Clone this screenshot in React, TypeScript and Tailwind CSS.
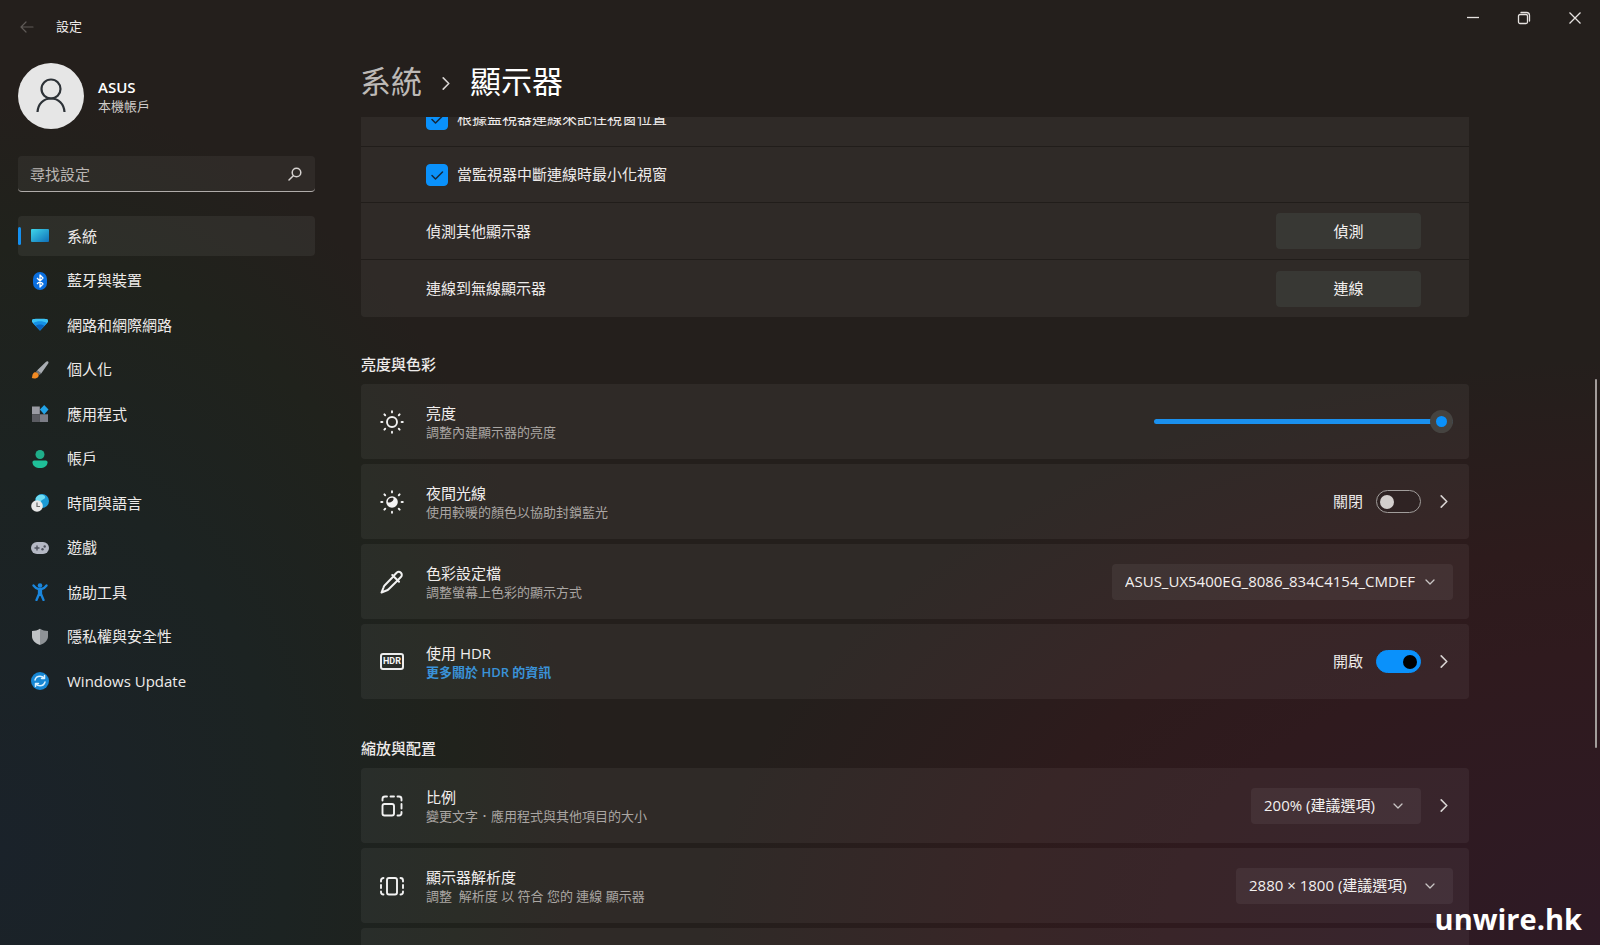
import React, { useState } from "react";

type IconProps = { children: React.ReactNode; size?: string; box?: string };

function Svg({ children, size = "size-[18px]", box = "0 0 18 18" }: IconProps) {
  return (
    <svg viewBox={box} className={`${size} shrink-0`} fill="none" aria-hidden="true">
      {children}
    </svg>
  );
}

const navItems: { label: string; icon: React.ReactNode }[] = [
  {
    label: "系統",
    icon: (
      <Svg>
        <defs>
          <linearGradient id="sys" x1="0" y1="0" x2="1" y2="1">
            <stop offset="0" stopColor="#3fd6ea" />
            <stop offset="1" stopColor="#0f6fb8" />
          </linearGradient>
        </defs>
        <rect x="0" y="2" width="18" height="13" rx="1" fill="url(#sys)" />
      </Svg>
    ),
  },
  {
    label: "藍牙與裝置",
    icon: (
      <Svg>
        <rect x="2" y="0" width="14" height="18" rx="7" fill="#0a6fe0" />
        <path d="M6 6l6 6-3 3V3l3 3-6 6" stroke="#fff" strokeWidth="1.3" strokeLinejoin="round" />
      </Svg>
    ),
  },
  {
    label: "網路和網際網路",
    icon: (
      <Svg>
        <path d="M1 6V4.200C1 3.300 2 2.800 9 2.800s8 .5 8 1.400V6L9 14.500z" fill="#3cc3f5" />
        <path d="M2 7.200C4 5.800 6.500 5.200 9 5.200s5 .6 7 2L9 14.500z" fill="#1591e6" />
        <path d="M4.500 9.800C6 8.800 7.500 8.400 9 8.400s3 .4 4.500 1.400L9 14.500z" fill="#0b63bd" />
      </Svg>
    ),
  },
  {
    label: "個人化",
    icon: (
      <Svg>
        <path d="M17 .4c.9.500.5 1.700 0 2.400L10.200 12.600 6 9.500 14.800 1c.6-.5 1.400-.9 2.200-.6z" fill="#a9adb2" />
        <path d="M6.300 9.300l3.900 3-1.500 1.700-3.900-3z" fill="#70757a" />
        <path d="M.8 17c.6-.8.200-2.200.9-3.800C2.500 11.200 4.200 10.800 5.600 11.400c1.800.6 2.800 2.400 1.800 4C6.300 17.400 3.200 18 .8 17z" fill="#f08a24" />
      </Svg>
    ),
  },
  {
    label: "應用程式",
    icon: (
      <Svg>
        <rect x="1" y="1.500" width="7.800" height="7.800" fill="#9a9ba3" />
        <rect x="1" y="9.300" width="7.800" height="7.700" fill="#5b5c62" />
        <rect x="8.800" y="9.300" width="8.200" height="7.700" fill="#7c7d86" />
        <path d="M13.200 0l4.300 4.600-4.300 4.900-4.300-4.900z" fill="#22a3e8" />
      </Svg>
    ),
  },
  {
    label: "帳戶",
    icon: (
      <Svg>
        <circle cx="9" cy="4.500" r="4.500" fill="#1fae8a" />
        <path d="M1.500 12.200c0-.9.700-1.700 1.700-1.700h11.600c1 0 1.700.8 1.700 1.700 0 3.600-3.300 5.800-7.500 5.800s-7.500-2.200-7.500-5.800z" fill="#1fbf98" />
      </Svg>
    ),
  },
  {
    label: "時間與語言",
    icon: (
      <Svg>
        <circle cx="11" cy="7" r="7" fill="#1c9bd6" />
        <path d="M8 1c4-1 7 1 6 3s-4 1-4 4-4 0-5-2 1-4 3-5z" fill="#6fdcf2" />
        <circle cx="6" cy="12" r="5.800" fill="#e8e8e8" />
        <path d="M6 8.500V12.500h3" stroke="#6b6b6b" strokeWidth="1.200" />
      </Svg>
    ),
  },
  {
    label: "遊戲",
    icon: (
      <Svg>
        <rect x="0" y="3" width="18" height="12" rx="6" fill="#b4b8c4" />
        <path d="M6 6.500v5M3.500 9h5" stroke="#4d515c" strokeWidth="1.400" />
        <circle cx="11.500" cy="10.300" r="1.200" fill="#4d515c" />
        <circle cx="13.700" cy="7.500" r="1.200" fill="#4d515c" />
      </Svg>
    ),
  },
  {
    label: "協助工具",
    icon: (
      <Svg>
        <circle cx="9" cy="2.500" r="2.300" fill="#1a86dd" />
        <path
          d="M2.500 2.500c1.500 2 3 3 4.500 3.300h4c1.500-.3 3-1.300 4.500-3.300M8 6v5l-2.500 6M10 6v5l2.500 6M9 6v6"
          stroke="#1a86dd"
          strokeWidth="2.300"
          strokeLinecap="round"
          strokeLinejoin="round"
        />
      </Svg>
    ),
  },
  {
    label: "隱私權與安全性",
    icon: (
      <Svg>
        <path d="M9 .8c2.500 1.700 5 2.200 8 2.200v5.200c0 4-3 6.800-8 8.800z" fill="#8e9296" />
        <path d="M9 .8C6.500 2.500 4 3 1 3v5.200c0 4 3 6.800 8 8.800z" fill="#bfc2c5" />
      </Svg>
    ),
  },
  {
    label: "Windows Update",
    icon: (
      <Svg>
        <circle cx="9" cy="9" r="9" fill="#1787d4" />
        <path
          d="M4 8c.6-2.300 2.600-3.700 5-3.700 1.600 0 3 .6 4 1.800M13.500 3.500v3h-3M14 10c-.6 2.300-2.600 3.700-5 3.700-1.600 0-3-.6-4-1.800M4.500 14.500v-3h3"
          stroke="#d9f1ff"
          strokeWidth="1.500"
          strokeLinecap="round"
          strokeLinejoin="round"
        />
      </Svg>
    ),
  },
];

const rays = [0, 45, 90, 135, 180, 225, 270, 315];

function SunIcon({ night }: { night?: boolean }) {
  return (
    <Svg size="size-6" box="0 0 24 24">
      {rays.map((r) => (
        <path key={r} d="M12 1.200v1.200" stroke="#f2f2f2" strokeWidth="1.900" strokeLinecap="round" transform={`rotate(${r} 12 12)`} />
      ))}
      {night ? (
        <>
          <circle cx="12" cy="12" r="5.800" fill="#f5f5f5" />
          <path d="M7.800 11.500c0-2.200 1.600-3.700 4.200-3.700 1.300 0 1.900.6 1.500 1.700-.6 1.800-2.200 2.800-4.200 3-1 .1-1.500-.2-1.500-1z" fill="#2e2b28" />
        </>
      ) : (
        <circle cx="12" cy="12" r="5" stroke="#f2f2f2" strokeWidth="1.900" />
      )}
    </Svg>
  );
}

function DropperIcon() {
  return (
    <Svg size="size-6" box="0 0 24 24">
      <path
        d="M14 5.500l2.600-2.700c1.300-1.200 3.100-1.200 4.300 0s1.200 3 0 4.200l-2.700 2.700M12.300 5l6.700 6.700M13.300 6.500l-8.500 8.700c-.6.7-1 1.300-1.200 2.100L1.500 22.500l5-2c.8-.2 1.500-.6 2.100-1.200l8.700-8.600"
        stroke="#f2f2f2"
        strokeWidth="2"
        strokeLinecap="round"
        strokeLinejoin="round"
      />
    </Svg>
  );
}

function HdrIcon() {
  return (
    <span
      aria-hidden="true"
      className="flex h-[17px] w-6 shrink-0 items-center justify-center rounded-[3px] border-2 border-[#ededed] font-[Roboto] text-[9px] leading-none font-bold text-[#f5f5f5]"
    >
      HDR
    </span>
  );
}

function ScaleIcon() {
  return (
    <Svg size="size-6" box="0 0 24 24">
      <g stroke="#f2f2f2" strokeWidth="1.900" strokeLinecap="round" strokeLinejoin="round">
        <rect x="2.500" y="10" width="11.500" height="11.500" rx="2" />
        <path d="M2.500 6.500V5c0-1.400 1.100-2.500 2.500-2.500h2M10.500 2.500h3.500M17.500 2.500H19c1.400 0 2.500 1.100 2.500 2.500v1.500M21.500 10v4.500M21.500 18v1c0 1.400-1.100 2.500-2.500 2.500h-1.500" />
      </g>
    </Svg>
  );
}

function ResolutionIcon() {
  return (
    <Svg size="size-6" box="0 0 24 24">
      <g stroke="#f2f2f2" strokeWidth="1.900" strokeLinecap="round" strokeLinejoin="round">
        <rect x="7" y="4" width="10" height="16.500" rx="2" />
        <path d="M3.500 4C2 4 1 5 1 6.500v1M1 11v3M1 17.500v.5c0 1.500 1 2.500 2.500 2.500M20.500 4C22 4 23 5 23 6.500v1M23 11v3M23 17.500v.5c0 1.500-1 2.500-2.500 2.500" />
      </g>
    </Svg>
  );
}

function ChevronRight() {
  return (
    <svg viewBox="0 0 8 14" className="h-[13px] w-2" fill="none" aria-hidden="true">
      <path d="M1 1l6 6-6 6" stroke="#d8d4d2" strokeWidth="1.700" strokeLinecap="round" strokeLinejoin="round" />
    </svg>
  );
}

function MoreButton({ label }: { label: string }) {
  return (
    <button type="button" aria-label={label} className="flex h-9 w-[19px] items-center justify-center">
      <ChevronRight />
    </button>
  );
}

function Dropdown({ label, value, width }: { label: string; value: string; width: string }) {
  return (
    <div className="relative">
      <select
        aria-label={label}
        defaultValue={value}
        className={`${width} h-9 appearance-none rounded-[4px] bg-white/6 pr-8 pl-[13px] text-[15px] text-[#f3f0ef]`}
      >
        <option>{value}</option>
      </select>
      <svg viewBox="0 0 10 6" className="pointer-events-none absolute top-[15px] right-[18px] h-[6px] w-[10px]" fill="none" aria-hidden="true">
        <path d="M1 1l4 4 4-4" stroke="#c9c5c4" strokeWidth="1.300" strokeLinecap="round" strokeLinejoin="round" />
      </svg>
    </div>
  );
}

function Toggle({ id, initial, label }: { id: string; initial: boolean; label: string }) {
  const [on, setOn] = useState(initial);
  return (
    <div className="flex items-center gap-[13px]">
      <label htmlFor={id} className="text-[15px] text-[#eeebea]">
        {on ? "開啟" : "關閉"}
      </label>
      <input
        id={id}
        type="checkbox"
        role="switch"
        aria-label={label}
        checked={on}
        onChange={(e) => setOn(e.target.checked)}
        className="flex h-[23px] w-[45px] appearance-none items-center rounded-full border border-[#a19d9b] bg-black/10 px-[3px] before:size-[14px] before:rounded-full before:bg-[#d3cfcd] checked:justify-end checked:border-[#0a91fb] checked:bg-[#0a91fb] checked:before:bg-black"
      />
    </div>
  );
}

function CheckRow({ id, label }: { id: string; label: string }) {
  return (
    <div className="flex h-14 items-center gap-[9px] pl-[65px]">
      <span className="relative size-[22px] shrink-0">
        <input id={id} type="checkbox" defaultChecked className="peer block size-[22px] appearance-none rounded-[4px] border border-[#a19d9b] checked:border-[#0a91fb] checked:bg-[#0a91fb]" />
        <svg viewBox="0 0 22 22" className="pointer-events-none absolute inset-0 hidden size-[22px] peer-checked:block" fill="none" aria-hidden="true">
          <path d="M6 11.500l3.500 3.500 7-7" stroke="#14283c" strokeWidth="1.500" strokeLinecap="round" strokeLinejoin="round" />
        </svg>
      </span>
      <label htmlFor={id} className="text-[15px] text-[#eeebea]">
        {label}
      </label>
    </div>
  );
}

function ActionRow({ label, action }: { label: string; action: string }) {
  return (
    <div className="flex h-[57px] items-center justify-between pr-12 pl-[65px]">
      <span className="text-[15px] text-[#eeebea]">{label}</span>
      <button type="button" className="h-9 w-[145px] rounded-[4px] bg-[#383834] text-[15px] text-[#f3f0ef]">
        {action}
      </button>
    </div>
  );
}

type CardProps = { icon: React.ReactNode; title: string; detail: React.ReactNode; children?: React.ReactNode };

function Card({ icon, title, detail, children }: CardProps) {
  return (
    <section className="flex h-[75px] items-center rounded-[4px] bg-white/5 pr-4 pl-[19px]">
      <div className="flex w-6 justify-center">{icon}</div>
      <div className="ml-[22px] flex-1">
        <h3 className="text-[15px] leading-[20px] text-[#f1eeed]">{title}</h3>
        <p className="text-[13px] leading-[18px] text-[#aaa6a3]">{detail}</p>
      </div>
      <div className="flex items-center gap-[13px]">{children}</div>
    </section>
  );
}

export default function App() {
  return (
    <div className="relative flex h-screen flex-col overflow-hidden bg-[#241f1c] bg-[radial-gradient(ellipse_58%_62%_at_102%_100%,#2e1a26_0%,#2f1a1e_50%,#2d1b1c_68%,transparent_100%),radial-gradient(ellipse_36%_80%_at_0%_90%,#1a222a_0%,#1c2322_50%,#20221c_80%,transparent_100%)] font-['Open_Sans','Noto_Sans_CJK_TC',sans-serif] text-[#eeebea]">
      <header className="flex h-[54px] shrink-0 items-start justify-between">
        <div className="flex h-full items-center pl-5">
          <button type="button" aria-label="上一頁">
            <svg viewBox="0 0 14 12" className="h-3 w-[14px]" fill="none" aria-hidden="true">
              <path d="M13 6H1M6 1L1 6l5 5" stroke="#5f5a57" strokeWidth="1.200" strokeLinecap="round" strokeLinejoin="round" />
            </svg>
          </button>
          <span className="ml-[22px] text-[13px]">設定</span>
        </div>
        <div className="flex">
          <button type="button" aria-label="最小化" className="flex h-9 w-[51px] items-center justify-center">
            <svg viewBox="0 0 14 14" className="size-[14px]" fill="none" aria-hidden="true">
              <path d="M1 6.500h12" stroke="#e6e2e0" strokeWidth="1.300" />
            </svg>
          </button>
          <button type="button" aria-label="還原" className="flex h-9 w-[51px] items-center justify-center">
            <svg viewBox="0 0 14 14" className="size-[14px]" fill="none" aria-hidden="true">
              <rect x="1.500" y="3.500" width="9" height="9" rx="1.500" stroke="#e6e2e0" strokeWidth="1.300" />
              <path d="M4 1.500h5.500c1.700 0 3 1.300 3 3V10" stroke="#e6e2e0" strokeWidth="1.300" strokeLinecap="round" />
            </svg>
          </button>
          <button type="button" aria-label="關閉視窗" className="flex h-9 w-[51px] items-center justify-center">
            <svg viewBox="0 0 14 14" className="size-[14px]" fill="none" aria-hidden="true">
              <path d="M1.500 1.500l11 11M12.500 1.500l-11 11" stroke="#e6e2e0" strokeWidth="1.300" />
            </svg>
          </button>
        </div>
      </header>

      <div className="flex min-h-0 flex-1">
        <aside className="w-[360px] shrink-0 pt-[9px] pr-[45px] pl-[18px]">
          <div className="flex items-center gap-[14px]">
            <div className="flex size-[66px] items-center justify-center rounded-full bg-[#e6e6e6]">
              <svg viewBox="0 0 32 36" className="h-9 w-8" fill="none" aria-hidden="true">
                <circle cx="16" cy="11" r="9.500" stroke="#2d3237" strokeWidth="2.200" />
                <path d="M2.500 34C3 26 8.500 20.500 16 20.500S29 26 29.500 34" stroke="#2d3237" strokeWidth="2.200" />
              </svg>
            </div>
            <div>
              <p className="text-[15px] leading-[20px] font-semibold text-white">ASUS</p>
              <p className="text-[13px] leading-[18px] text-[#cfcbc9]">本機帳戶</p>
            </div>
          </div>

          <div className="relative mt-[27px]">
            <input
              type="search"
              aria-label="尋找設定"
              placeholder="尋找設定"
              className="block h-9 w-full rounded-[4px] border-b border-[#b0acaa] bg-white/5 pr-10 pl-3 text-[15px] placeholder:text-[#bab6b3]"
            />
            <svg viewBox="0 0 14 14" className="pointer-events-none absolute top-[11px] right-[13px] size-[14px]" fill="none" aria-hidden="true">
              <circle cx="8.500" cy="5.500" r="4.300" stroke="#d6d2d0" strokeWidth="1.500" />
              <path d="M5.300 8.700L1 13" stroke="#d6d2d0" strokeWidth="1.500" strokeLinecap="round" />
            </svg>
          </div>

          <nav className="mt-6">
            <ul className="flex h-[485px] flex-col justify-between">
              {navItems.map((item, i) => (
                <li key={item.label}>
                  <a
                    href="#"
                    aria-current={i === 0 ? "page" : undefined}
                    className="relative flex h-10 items-center gap-[18px] rounded-[4px] pl-[13px] text-[15px] aria-[current=page]:bg-white/6"
                  >
                    {i === 0 && <span className="absolute top-[11px] left-0 h-[18px] w-[3px] rounded-full bg-[#1490f0]" />}
                    {item.icon}
                    <span>{item.label}</span>
                  </a>
                </li>
              ))}
            </ul>
          </nav>
        </aside>

        <main className="flex min-w-0 flex-1 flex-col">
          <h1 className="flex h-[63px] shrink-0 items-center pb-[9px] text-[31px] leading-none">
            <a href="#" className="text-[#bdb9b6]">
              系統
            </a>
            <span className="mx-5 mt-1">
              <ChevronRight />
            </span>
            <span className="text-white">顯示器</span>
          </h1>

          <div className="min-h-0 flex-1 overflow-hidden">
            <div className="-mt-[26px] max-w-[1109px] pl-px">
              <section className="divide-y divide-[#211d1a] rounded-[4px] bg-white/5">
                <CheckRow id="remember" label="根據監視器連線來記住視窗位置" />
                <CheckRow id="minimize" label="當監視器中斷連線時最小化視窗" />
                <ActionRow label="偵測其他顯示器" action="偵測" />
                <ActionRow label="連線到無線顯示器" action="連線" />
              </section>

              <h2 className="mt-[37px] mb-[10px] text-[15px] leading-[20px] font-medium">亮度與色彩</h2>
              <div className="flex flex-col gap-[5px]">
                <Card icon={<SunIcon />} title="亮度" detail="調整內建顯示器的亮度">
                  <input
                    type="range"
                    aria-label="亮度"
                    min={0}
                    max={100}
                    defaultValue={100}
                    className="h-6 w-[299px] appearance-none bg-transparent [&::-webkit-slider-runnable-track]:h-[5px] [&::-webkit-slider-runnable-track]:rounded-full [&::-webkit-slider-runnable-track]:bg-[#1a90ee] [&::-webkit-slider-thumb]:-mt-[9px] [&::-webkit-slider-thumb]:size-[23px] [&::-webkit-slider-thumb]:appearance-none [&::-webkit-slider-thumb]:rounded-full [&::-webkit-slider-thumb]:border-[6px] [&::-webkit-slider-thumb]:border-[#454340] [&::-webkit-slider-thumb]:bg-[#0a91fb]"
                  />
                </Card>
                <Card icon={<SunIcon night />} title="夜間光線" detail="使用較暖的顏色以協助封鎖藍光">
                  <Toggle id="night" initial={false} label="夜間光線" />
                  <MoreButton label="夜間光線選項" />
                </Card>
                <Card icon={<DropperIcon />} title="色彩設定檔" detail="調整螢幕上色彩的顯示方式">
                  <Dropdown label="色彩設定檔" value="ASUS_UX5400EG_8086_834C4154_CMDEF" width="w-[341px]" />
                </Card>
                <Card
                  icon={<HdrIcon />}
                  title="使用 HDR"
                  detail={
                    <a href="#" className="font-semibold text-[#3a92d8]">
                      更多關於 HDR 的資訊
                    </a>
                  }
                >
                  <Toggle id="hdr" initial label="使用 HDR" />
                  <MoreButton label="HDR 選項" />
                </Card>
              </div>

              <h2 className="mt-[39px] mb-[10px] text-[15px] leading-[20px] font-medium">縮放與配置</h2>
              <div className="flex flex-col gap-[5px]">
                <Card icon={<ScaleIcon />} title="比例" detail="變更文字．應用程式與其他項目的大小">
                  <Dropdown label="比例" value="200% (建議選項)" width="w-[170px]" />
                  <MoreButton label="比例選項" />
                </Card>
                <Card
                  icon={<ResolutionIcon />}
                  title="顯示器解析度"
                  detail={<span className="whitespace-pre">{"調整  解析度 以 符合 您的 連線 顯示器"}</span>}
                >
                  <Dropdown label="顯示器解析度" value="2880 × 1800 (建議選項)" width="w-[217px]" />
                </Card>
                <div className="h-[75px] rounded-[4px] bg-white/5" />
              </div>
            </div>
          </div>
        </main>
      </div>

      <div className="absolute top-[379px] right-[3px] h-[369px] w-[2px] rounded-full bg-[#a39d9b]" />
      <p className="absolute right-[18px] bottom-[6px] text-[29px] leading-[40px] font-bold text-white">unwire.hk</p>
    </div>
  );
}
